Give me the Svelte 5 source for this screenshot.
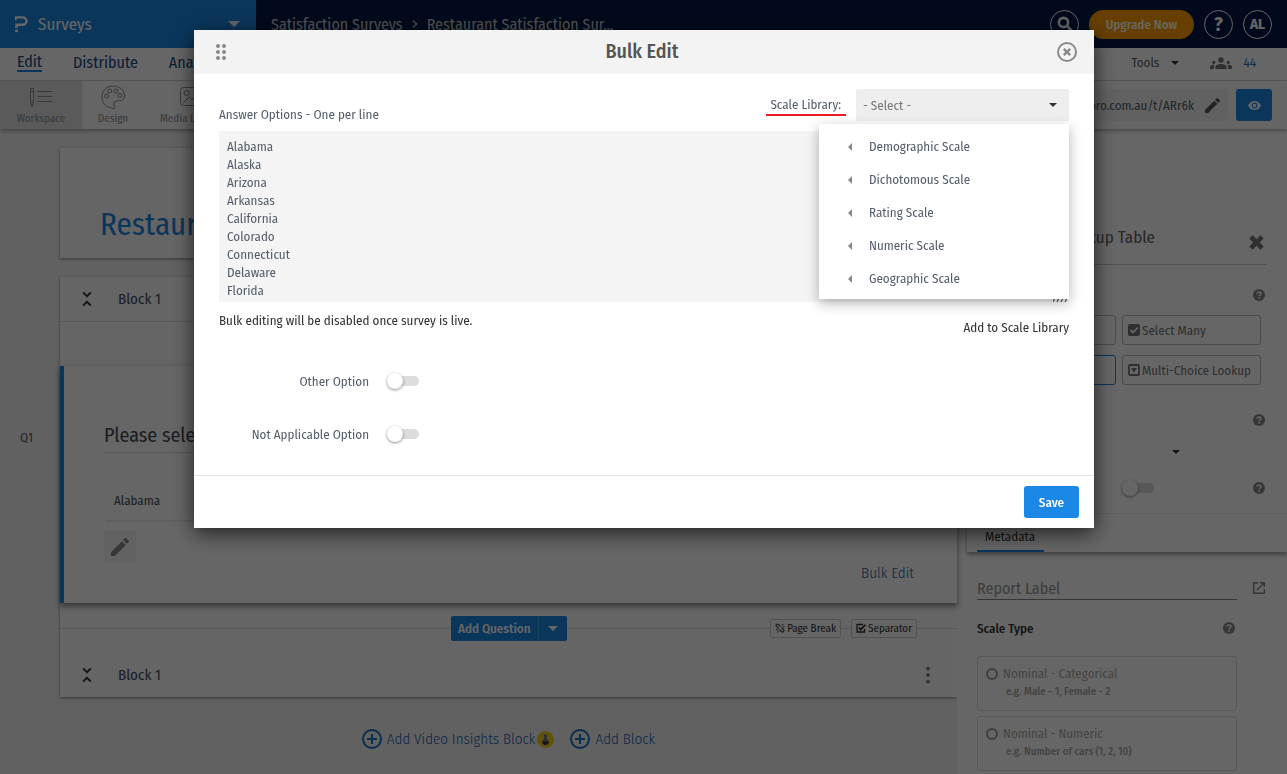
<script>
  let answers = $state(
    [
      "Alabama",
      "Alaska",
      "Arizona",
      "Arkansas",
      "California",
      "Colorado",
      "Connecticut",
      "Delaware",
      "Florida"
    ].join("\n")
  );
  let otherOption = $state(false);
  let notApplicable = $state(false);
  let randomize = $state(false);
  let reportLabel = $state("");
  let scaleType = $state("");

  const scales = [
    "Demographic Scale",
    "Dichotomous Scale",
    "Rating Scale",
    "Numeric Scale",
    "Geographic Scale"
  ];

  const scaleTypes = [
    { name: "Nominal - Categorical", hint: "e.g. Male - 1, Female - 2" },
    { name: "Nominal - Numeric", hint: "e.g. Number of cars (1, 2, 10)" }
  ];
</script>

{#snippet help()}
  <button class="icon" aria-label="Help">
    <svg width="12" height="12" viewBox="0 0 12 12">
      <circle cx="6" cy="6" r="6" fill="#888" />
      <path d="M4.2 4.7C4.2 2.3 8 2.4 8 4.5 8 5.9 6.1 5.8 6.1 7.2" fill="none" stroke="#fff" stroke-width="1.5" />
      <rect x="5.3" y="8.2" width="1.6" height="1.6" fill="#fff" />
    </svg>
  </button>
{/snippet}

{#snippet collapse()}
  <button class="icon" aria-label="Collapse block">
    <svg width="10" height="16" viewBox="0 0 10 16" fill="none" stroke="#333" stroke-width="1.8">
      <path d="M1.2 1.5 5 5.2 8.8 1.5M1.2 14.5 5 10.8 8.8 14.5" />
    </svg>
  </button>
{/snippet}

{#snippet pencil(size, color)}
  <svg width={size} height={size} viewBox="3 3 18 18" fill={color}>
    <path d="M3 17.25V21h3.75L17.81 9.94l-3.75-3.75L3 17.25zM20.71 7.04a1 1 0 0 0 0-1.41l-2.34-2.34a1 1 0 0 0-1.41 0l-1.83 1.83 3.75 3.75 1.83-1.83z" />
  </svg>
{/snippet}

{#snippet plus()}
  <svg width="20" height="20" viewBox="0 0 20 20" fill="none" stroke="#1b6fc0" stroke-width="2">
    <circle cx="10" cy="10" r="9" />
    <path d="M10 5v10M5 10h10" />
  </svg>
{/snippet}

<div class="page">
  <header class="topbar">
    <button class="product">
      <svg width="13" height="17" viewBox="0 0 13 17" fill="none" stroke="#fff" stroke-width="2.4">
        <path d="M0 1.4h7.8a3.7 3.7 0 0 1 0 7.4H1.5V12" />
        <path d="M.8 1v3.5" stroke-width="1.6" />
        <rect x="0" y="13.6" width="3" height="2.6" rx="1" fill="#fff" stroke="none" />
      </svg>
      <span>Surveys</span>
      <svg class="product-caret" width="12" height="6" viewBox="0 0 12 6"><path d="M0 0h12L6 6z" fill="#fff" /></svg>
    </button>
    <nav class="crumbs" aria-label="Breadcrumb">
      <a href="#surveys">Satisfaction Surveys</a>
      <svg width="6" height="8" viewBox="0 0 6 8" fill="none" stroke="#ccc" stroke-width="1.4"><path d="M1 .5 4.6 4 1 7.5" /></svg>
      <a href="#survey">Restaurant Satisfaction Sur...</a>
    </nav>
    <div class="account">
      <button class="round" aria-label="Search">
        <svg width="16" height="16" viewBox="0 0 16 16" fill="none" stroke="#fff" stroke-width="2.6"><circle cx="6.5" cy="6.5" r="4.6" /><path d="M10 10l4.6 4.6" /></svg>
      </button>
      <button class="upgrade">Upgrade Now</button>
      <button class="round question">?</button>
      <button class="round">AL</button>
    </div>
  </header>

  <nav class="tabs">
    <a class="active" href="#edit">Edit</a>
    <a href="#distribute">Distribute</a>
    <a href="#analytics">Analytics</a>
    <button class="tools">
      Tools
      <svg width="8" height="4" viewBox="0 0 8 4"><path d="M0 0h8L4 4z" fill="#333" /></svg>
    </button>
    <a class="people" href="#responses">
      <svg width="22" height="12" viewBox="0 0 22 12" fill="#777">
        <circle cx="11" cy="3" r="2.7" /><path d="M5.5 12V9.6c0-3.6 11-3.6 11 0V12z" />
        <circle cx="3.8" cy="5.4" r="1.6" /><path d="M0 12v-2c0-1.6 2-2.4 4.4-2.2-.5.8-.6 2.2-.5 4.2z" />
        <circle cx="18.2" cy="5.4" r="1.6" /><path d="M22 12v-2c0-1.6-2-2.4-4.4-2.2.5.8.6 2.2.5 4.2z" />
      </svg>
      44
    </a>
  </nav>

  <div class="toolbar">
    <button class="tool selected">
      <svg width="24" height="24" viewBox="0 0 24 24" fill="none" stroke="#8a8f99">
        <path d="M1.5 3.5h3v14L3 21.5l-1.5-4zM1.5 6.5h3M1.5 17h3M8.5 6.5H23M8.5 11.5H23M8.5 16.5H23" />
      </svg>
      Workspace
    </button>
    <button class="tool">
      <svg width="24" height="24" viewBox="0 0 24 24" fill="none" stroke="#8a8f99">
        <path d="M13 23.5C5 23 1 18 1 12 1 5.5 6 1 12.2 1 18.5 1 23.5 5 23.5 11c0 7-9 3-10.5 7-.8 2 2 5.5 0 5.5z" />
        <circle cx="5.5" cy="11" r="2" /><circle cx="8.8" cy="6" r="2" /><circle cx="15" cy="6" r="2" /><circle cx="19" cy="10.5" r="2" />
      </svg>
      Design
    </button>
    <button class="tool">
      <svg width="24" height="24" viewBox="0 0 24 24" fill="none" stroke="#8a8f99">
        <rect x="1.5" y="2.500" width="20" height="18" rx="3" /><circle cx="7.500" cy="8" r="2.5" /><path d="M4 18l6-6 3 3 6-7 2.500 3" />
      </svg>
      Media Library
    </button>
    <div class="share">
      <span>questionpro.com.au/t/ARr6k</span>
      <button class="icon" aria-label="Edit link">{@render pencil(15, "#555")}</button>
    </div>
    <button class="preview" aria-label="Preview">
      <svg width="13" height="9" viewBox="0 0 13 9"><path d="M0 4.5C3-1.5 10-1.5 13 4.5 10 10.5 3 10.5 0 4.5z" fill="#fff" /><circle cx="6.5" cy="4.5" r="2.3" fill="#fff" stroke="#1b87e6" stroke-width="1.2" /></svg>
    </button>
  </div>

  <div class="workspace">
    <div class="gutter">Q1</div>

    <main>
      <section class="card title-card">
        <h1>Restaurant Satisfaction Survey</h1>
      </section>

      <section class="card">
        <div class="block-head">
          {@render collapse()}
          <h2>Block 1</h2>
        </div>
        <div class="block-space"></div>
        <article class="question-card">
          <p class="prompt">Please select</p>
          <p class="choice">Alabama</p>
          <button class="icon edit-choice" aria-label="Edit choices">{@render pencil(18, "#888")}</button>
          <a class="bulk" href="#bulk">Bulk Edit</a>
        </article>
        <div class="add-row">
          <div class="add-question">
            <button>Add Question</button>
            <button aria-label="More question types">
              <svg width="10" height="5" viewBox="0 0 10 5"><path d="M0 0h10L5 5z" fill="#fff" /></svg>
            </button>
          </div>
          <div class="breaks">
            <button>
              <svg width="10" height="10" viewBox="0 0 10 10" fill="none" stroke="#444" stroke-width="1.1">
                <path d="M3.8 5.5 1.6 3.5C.2 1.8 2 .3 3.5 1.5L5.5 3.5M4.5 6.5l2 2c1.5 1.2 3.3-.5 2-2L6.5 4.5M1 7l2-.5M2.5 9.5 3.5 8M7 2.5 8 1M8 4l1.5-.5" />
              </svg>
              Page Break
            </button>
            <button>
              <svg width="10" height="10" viewBox="0 0 10 10" fill="none" stroke="#333" stroke-width="1.3">
                <path d="M8.5 6v3H1V1.5h6" /><path d="M2.8 4.5 4.8 6.5 9.5 1.8" stroke-width="1.8" />
              </svg>
              Separator
            </button>
          </div>
        </div>
        <div class="block-head last">
          {@render collapse()}
          <h2>Block 1</h2>
          <button class="icon more" aria-label="Block menu">
            <svg width="4" height="18" viewBox="0 0 4 18" fill="#888"><circle cx="2" cy="2.5" r="2" /><circle cx="2" cy="9" r="2" /><circle cx="2" cy="15.5" r="2" /></svg>
          </button>
        </div>
      </section>

      <div class="add-links">
        <a href="#video">
          {@render plus()}
          Add Video Insights Block
          <svg class="flask" width="17" height="17" viewBox="0 0 17 17">
            <circle cx="8.5" cy="8.5" r="8.5" fill="#f5cf1f" />
            <path d="M6.5 3.5h4v1H10v3.6a3.2 3.2 0 1 1-3 0V4.5h-.5z" fill="#777" />
            <path d="M5.3 10.5h6.4a3.2 3.2 0 1 1-6.4 0z" fill="#333" />
          </svg>
        </a>
        <a href="#block">
          {@render plus()}
          Add Block
        </a>
      </div>
    </main>

    <aside>
      <div class="settings">
        <div class="settings-title">
          <h3>Lookup Table</h3>
          <button class="icon" aria-label="Close settings">
            <svg width="15" height="15" viewBox="0 0 14 14" stroke="#777" stroke-width="4.4"><path d="M1.800 1.800l10.400 10.400M12.200 1.800 1.800 12.200" /></svg>
          </button>
        </div>
        <div class="help-row first">{@render help()}</div>
        <div class="types">
          <button aria-label="Select One"></button>
          <button>
            <svg width="12" height="12" viewBox="0 0 12 12"><rect width="12" height="12" rx="2" fill="#777" /><path d="M2.5 6 5 8.5 9.8 3.5" fill="none" stroke="#fff" stroke-width="1.8" /></svg>
            Select Many
          </button>
          <button class="chosen" aria-label="Lookup Table"></button>
          <button>
            <svg width="12" height="12" viewBox="0 0 12 12"><rect x="1" y="1" width="10" height="10" rx="1" fill="none" stroke="#777" stroke-width="1.8" /><path d="M3 4h6L6 8.5z" fill="#777" /></svg>
            Multi-Choice Lookup
          </button>
        </div>
        <div class="help-row second">{@render help()}</div>
        <div class="order">
          <svg width="8" height="4" viewBox="0 0 8 4"><path d="M0 0h8L4 4z" fill="#333" /></svg>
        </div>
        <div class="toggle-row">
          <input class="toggle" type="checkbox" aria-label="Randomize" bind:checked={randomize} />
          {@render help()}
        </div>
      </div>

      <div class="meta-tabs"><button>Metadata</button></div>

      <div class="meta">
        <div class="report">
          <input type="text" placeholder="Report Label" aria-label="Report Label" bind:value={reportLabel} />
          <button class="icon" aria-label="Open report label">
            <svg width="12" height="12" viewBox="0 0 12 12" fill="none" stroke="#888" stroke-width="1.4"><path d="M5 .7H.7v10.6h10.6V7M7 .7h4.3V5M11.3.7 4 8" /></svg>
          </button>
        </div>
        <div class="scale-head">
          <h4>Scale Type</h4>
          {@render help()}
        </div>
        {#each scaleTypes as type}
          <label class="scale-card">
            <input type="radio" name="scale-type" value={type.name} bind:group={scaleType} />
            <span class="scale-name">{type.name}</span>
            <span class="scale-hint">{type.hint}</span>
          </label>
        {/each}
      </div>
    </aside>
  </div>
</div>

<div class="overlay">
  <div class="dialog" role="dialog" aria-modal="true" aria-labelledby="dialog-title">
    <div class="dialog-head">
      <svg width="12" height="16" viewBox="0 0 12 16" fill="#888">
        {#each [2, 8, 14] as y}
          <circle cx="3" cy={y} r="2" /><circle cx="9" cy={y} r="2" />
        {/each}
      </svg>
      <h2 id="dialog-title">Bulk Edit</h2>
      <button class="icon" aria-label="Close">
        <svg width="20" height="20" viewBox="0 0 20 20" fill="none" stroke="#8a8a8a" stroke-width="2"><circle cx="10" cy="10" r="9" /><path d="M6.8 6.8l6.4 6.4M13.2 6.8l-6.4 6.4" stroke-width="2.4" /></svg>
      </button>
    </div>

    <div class="dialog-body">
      <div class="field-head">
        <label for="answers">Answer Options - One per line</label>
        <div class="library">
          <label for="library">Scale Library:</label>
          <div class="picker">
            <select id="library"><option>- Select -</option></select>
            <ul class="menu">
              {#each scales as scale}
                <li>
                  <button>
                    <svg width="4" height="8" viewBox="0 0 4 8"><path d="M4 0v8L0 4z" fill="#888" /></svg>
                    {scale}
                  </button>
                </li>
              {/each}
            </ul>
          </div>
        </div>
      </div>

      <div class="answers">
        <textarea id="answers" bind:value={answers}></textarea>
        <svg class="grip" width="16" height="6" viewBox="0 0 16 6" stroke="#555" stroke-width="1.2"><path d="M0 6l3-6M4 6l3-6M8 6l3-6M12 6l3-6" /></svg>
      </div>

      <div class="notes">
        <p>Bulk editing will be disabled once survey is live.</p>
        <button class="add-scale">Add to Scale Library</button>
      </div>

      <div class="option">
        <label for="other">Other Option</label>
        <input class="toggle" id="other" type="checkbox" bind:checked={otherOption} />
      </div>
      <div class="option">
        <label for="not-applicable">Not Applicable Option</label>
        <input class="toggle" id="not-applicable" type="checkbox" bind:checked={notApplicable} />
      </div>
    </div>

    <div class="dialog-foot"><button class="save">Save</button></div>
  </div>
</div>

<style>
  :global(body) {
    margin: 0;
    overflow: hidden;
    font-family: "Fira Sans Condensed", Roboto, sans-serif;
    font-size: 13px;
    color: #545e6b;
  }

  * {
    box-sizing: border-box;
  }

  h1, h2, h3, h4, p, ul {
    margin: 0;
    padding: 0;
    font-weight: 400;
  }

  button, input, select, textarea {
    font: inherit;
    color: inherit;
    margin: 0;
    border: 0;
    padding: 0;
    background: none;
  }

  a {
    color: inherit;
    text-decoration: none;
  }

  svg {
    display: block;
    flex: none;
  }

  .icon {
    display: flex;
    align-items: center;
    justify-content: center;
  }

  .page {
    height: 100vh;
    display: flex;
    flex-direction: column;
    overflow: hidden;
    background: #f3f3f3;
  }

  /* top bar */
  .topbar {
    flex: none;
    display: flex;
    align-items: stretch;
    height: 48px;
    background: #001b48;
    color: #fff;
  }

  .product {
    width: 256px;
    padding: 0 16px 0 15px;
    display: flex;
    align-items: center;
    gap: 10px;
    background: #1b87e6;
    font-size: 17px;
  }

  .product-caret {
    margin-left: auto;
  }

  .crumbs {
    display: flex;
    align-items: center;
    gap: 9px;
    padding-left: 15px;
    font-size: 16px;
    color: #ccc;
  }

  .account {
    display: flex;
    align-items: center;
    gap: 10px;
    margin-left: auto;
    padding-right: 15px;
  }

  .round {
    width: 29px;
    height: 29px;
    display: flex;
    align-items: center;
    justify-content: center;
    border: 1px solid #fff;
    border-radius: 50%;
    font-size: 15px;
    font-weight: 700;
  }

  .question {
    font-size: 20px;
  }

  .upgrade {
    width: 105px;
    height: 29px;
    border-radius: 15px;
    background: #ff9e00;
    font-weight: 500;
  }

  /* section tabs */
  .tabs {
    flex: none;
    display: flex;
    align-items: center;
    height: 33px;
    padding: 0 31px 2px 17px;
    gap: 31px;
    background: #fff;
    border-bottom: 1px solid #d8d8d8;
    font-size: 16px;
    line-height: 16px;
    color: #1b4b8a;
  }

  .tabs .active {
    border-bottom: 2px solid #1b87e6;
  }

  .tools {
    display: flex;
    align-items: center;
    gap: 12px;
    margin-left: auto;
    font-size: 13px;
    color: #545e6b;
  }

  .people {
    display: flex;
    align-items: center;
    gap: 11px;
    font-size: 13px;
    color: #1b6fc0;
  }

  .toolbar {
    flex: none;
    display: flex;
    align-items: center;
    height: 48px;
    padding-right: 15px;
    background: #fcfcfc;
    box-shadow: 0 2px 4px rgba(0, 0, 0, 0.3);
    position: relative;
  }

  .tool {
    align-self: stretch;
    display: flex;
    flex-direction: column;
    align-items: center;
    gap: 3px;
    min-width: 62px;
    padding-top: 4px;
    font-size: 11px;
    color: #8a8f99;
    white-space: nowrap;
  }

  .tool.selected {
    width: 82px;
    background: #e0e0e0;
  }

  .tool + .tool + .tool {
    padding-left: 16px;
  }

  .share {
    display: flex;
    align-items: center;
    gap: 11px;
    height: 32px;
    margin-left: auto;
    margin-right: 8px;
    padding: 0 8px;
    border-radius: 3px;
    background: #f3f3f3;
  }

  .preview {
    width: 36px;
    height: 32px;
    display: flex;
    align-items: center;
    justify-content: center;
    border-radius: 3px;
    background: #1b87e6;
  }

  /* workspace */
  .workspace {
    flex: 1;
    display: flex;
    min-height: 0;
  }

  .gutter {
    width: 60px;
    padding: 301px 0 0 20px;
  }

  main {
    flex: 1;
    padding-top: 19px;
  }

  .card {
    background: #fcfcfc;
    box-shadow: 0 1px 3px rgba(0, 0, 0, 0.45);
  }

  .title-card {
    height: 110px;
    margin-bottom: 19px;
    padding: 58px 0 0 40px;
  }

  h1 {
    font-size: 31px;
    line-height: 38px;
    color: #1b87e6;
  }

  .block-head {
    display: flex;
    align-items: center;
    height: 45px;
    padding: 0 27px 0 22px;
    border-bottom: 1px solid #ddd;
  }

  .block-head.last {
    height: 44px;
    border: 0;
  }

  .block-head h2 {
    margin-left: 26px;
    font-size: 15px;
    color: #444c57;
  }

  .more {
    margin-left: auto;
  }

  .block-space {
    height: 44px;
  }

  .question-card {
    display: flex;
    flex-direction: column;
    height: 237px;
    padding: 53px 43px 20px 40px;
    border-left: 4px solid #1b87e6;
    background: #fff;
    box-shadow: 0 3px 6px rgba(0, 0, 0, 0.5);
    position: relative;
  }

  .prompt {
    height: 34px;
    line-height: 32px;
    border-bottom: 1px solid #ddd;
    font-size: 20px;
    color: #444c57;
  }

  .choice {
    height: 48px;
    margin: 21px 0 9px 2px;
    padding-left: 8px;
    line-height: 54px;
    border-bottom: 2px solid #eee;
    color: #444c57;
  }

  .edit-choice {
    flex: none;
    width: 32px;
    height: 32px;
    background: #f5f5f5;
  }

  .bulk {
    align-self: flex-end;
    margin-top: 1px;
    font-size: 15px;
    font-weight: 300;
    color: #1b5fb0;
  }

  .add-row {
    display: flex;
    align-items: center;
    justify-content: space-between;
    height: 50px;
    padding: 0 40px 0 391px;
    background: linear-gradient(#ddd, #ddd) 0 25px / 100% 1px no-repeat;
  }

  .add-question {
    display: flex;
    height: 25px;
    border-radius: 2px;
    overflow: hidden;
    background: #1b87e6;
    color: #fff;
  }

  .add-question button {
    padding: 0 7px;
    font-weight: 500;
  }

  .add-question button + button {
    padding: 0 9px;
    border-left: 1px solid #2bb0e0;
  }

  .breaks {
    display: flex;
    gap: 10px;
  }

  .breaks button {
    display: flex;
    align-items: center;
    gap: 2px;
    height: 19px;
    padding: 0 4px;
    border: 1px solid #d0d0d0;
    border-radius: 2px;
    background: #fcfcfc;
    font-size: 11px;
    color: #333;
  }

  .add-links {
    display: flex;
    justify-content: center;
    gap: 16px;
    margin-top: 32px;
    font-size: 15px;
    font-weight: 300;
    color: #1b5fb0;
  }

  .add-links a {
    display: flex;
    align-items: center;
    gap: 5px;
  }

  .flask {
    margin-left: -3px;
  }

  /* settings panel */
  aside {
    width: 330px;
    background: #fff;
  }

  .settings {
    height: 385px;
    border-bottom: 1px solid #eee;
    padding: 91px 20px 0;
  }

  .settings-title {
    display: flex;
    align-items: center;
    justify-content: space-between;
    height: 45px;
    padding-right: 3px;
    border-bottom: 1px solid #ccc;
  }

  .settings-title h3 {
    width: 178px;
    padding-bottom: 10px;
    text-align: right;
    font-size: 17px;
    color: #666;
  }

  .help-row {
    display: flex;
    justify-content: flex-end;
    padding-right: 2px;
  }

  .first {
    padding-top: 24px;
  }

  .types {
    display: grid;
    grid-template-columns: 1fr 1fr;
    gap: 10px 6px;
    margin: 14px 6px 0 0;
  }

  .types button {
    display: flex;
    align-items: center;
    gap: 2px;
    height: 30px;
    padding-left: 5px;
    border: 1px solid #bbb;
    border-radius: 3px;
    color: #777;
    white-space: nowrap;
  }

  .types .chosen {
    border-color: #1b87e6;
  }

  .second {
    padding-top: 29px;
  }

  .order {
    display: flex;
    justify-content: flex-end;
    margin: 24px 87px 0 0;
  }

  .toggle-row {
    display: flex;
    align-items: center;
    justify-content: space-between;
    margin-top: 28px;
    padding: 0 2px 0 145px;
  }

  .meta-tabs {
    display: flex;
    height: 38px;
    margin-left: 10px;
    padding-left: 10px;
    box-shadow: 0 3px 4px rgba(0, 0, 0, 0.35);
  }

  .meta-tabs button {
    padding: 9px 9px 0 8px;
    border-bottom: 2px solid #1b87e6;
    color: #333;
  }

  .meta {
    padding: 23px 22px 0 20px;
  }

  .report {
    display: flex;
    align-items: center;
    gap: 16px;
  }

  .report input {
    flex: 1;
    height: 25px;
    padding-top: 2px;
    border-bottom: 1px solid #888;
    font-size: 16px;
  }

  .report input::placeholder {
    color: #999;
    opacity: 1;
  }

  .scale-head {
    display: flex;
    align-items: center;
    justify-content: space-between;
    height: 20px;
    margin: 18px 30px 18px 0;
  }

  h4 {
    font-weight: 500;
    color: #333;
  }

  .scale-card {
    display: grid;
    grid-template-columns: 12px 1fr;
    align-content: start;
    column-gap: 5px;
    height: 55px;
    margin: 0 28px 5px 0;
    padding: 9px 8px;
    border: 1px solid #ddd;
    border-radius: 3px;
    color: #aaa;
  }

  .scale-card input {
    appearance: none;
    width: 12px;
    height: 12px;
    border: 2px solid #999;
    border-radius: 50%;
    align-self: center;
  }

  .scale-name {
    line-height: 16px;
  }

  .scale-hint {
    grid-column: 2;
    padding: 2px 0 0 3px;
    font-size: 11px;
    line-height: 15px;
    font-weight: 500;
  }

  .toggle {
    appearance: none;
    display: flex;
    align-items: center;
    width: 32px;
    height: 10px;
    border-radius: 5px;
    background: #dcdcdc;
  }

  .toggle::before {
    content: "";
    flex: none;
    width: 16px;
    height: 16px;
    border-radius: 50%;
    background: #fff;
    box-shadow: 0 1px 3px rgba(0, 0, 0, 0.45);
  }

  .toggle:checked {
    justify-content: flex-end;
    background: #8dc3f2;
  }

  /* dialog */
  .overlay {
    position: fixed;
    inset: 0;
    z-index: 10;
    display: flex;
    justify-content: center;
    align-items: flex-start;
    padding: 30px 0 0 1px;
    background: rgba(0, 0, 0, 0.6);
  }

  .dialog {
    width: 900px;
    max-width: 100%;
    background: #fff;
    box-shadow: 0 5px 20px rgba(0, 0, 0, 0.7);
  }

  .dialog-head {
    display: flex;
    align-items: center;
    justify-content: space-between;
    height: 44px;
    padding: 0 17px 0 21px;
    background: #f3f3f3;
  }

  .dialog-head h2 {
    padding-bottom: 3px;
    font-size: 20px;
    font-weight: 500;
    color: #555;
  }

  .dialog-body {
    padding: 15px 25px 13px;
  }

  .field-head {
    display: flex;
    justify-content: space-between;
    align-items: flex-end;
    height: 33px;
  }

  .library {
    display: flex;
    align-items: flex-start;
    gap: 10px;
    height: 33px;
  }

  .library label {
    height: 27px;
    padding: 0 5px 0 4px;
    line-height: 31px;
    border-bottom: 2px solid #ed1c24;
  }

  .picker {
    position: relative;
  }

  .picker select {
    appearance: none;
    display: block;
    width: 213px;
    height: 32px;
    padding: 0 7px;
    border-radius: 2px;
    background: #eee url("data:image/svg+xml,%3Csvg xmlns='http://www.w3.org/2000/svg' width='8' height='4'%3E%3Cpath d='M0 0h8L4 4z' fill='%23333'/%3E%3C/svg%3E") right 12px center no-repeat;
    color: #777;
  }

  .menu {
    position: absolute;
    top: 35px;
    right: 0;
    z-index: 2;
    width: 250px;
    padding: 6px 0 4px;
    background: #fff;
    box-shadow: 0 4px 12px rgba(0, 0, 0, 0.3);
    list-style: none;
  }

  .menu button {
    display: flex;
    align-items: center;
    gap: 17px;
    width: 100%;
    height: 33px;
    padding-left: 29px;
  }

  .answers {
    position: relative;
    margin-top: 9px;
  }

  textarea {
    display: block;
    width: 100%;
    height: 171px;
    padding: 7px 8px;
    line-height: 18px;
    background: #f4f4f4;
    resize: none;
    overflow: hidden;
  }

  .grip {
    position: absolute;
    right: 0;
    bottom: 0;
  }

  .notes {
    display: flex;
    justify-content: space-between;
    align-items: flex-start;
    height: 54px;
    padding-top: 10px;
    line-height: 18px;
    color: #333;
  }

  .add-scale {
    margin-top: 7px;
  }

  .option {
    display: flex;
    align-items: center;
    gap: 18px;
    height: 50px;
    margin-bottom: 3px;
  }

  .option label {
    width: 150px;
    text-align: right;
  }

  .dialog-foot {
    display: flex;
    justify-content: flex-end;
    padding: 10px 15px;
    border-top: 1px solid #e2e2e2;
  }

  .save {
    width: 55px;
    height: 32px;
    border-radius: 3px;
    background: #1b87e6;
    color: #fff;
    font-weight: 500;
  }
</style>
